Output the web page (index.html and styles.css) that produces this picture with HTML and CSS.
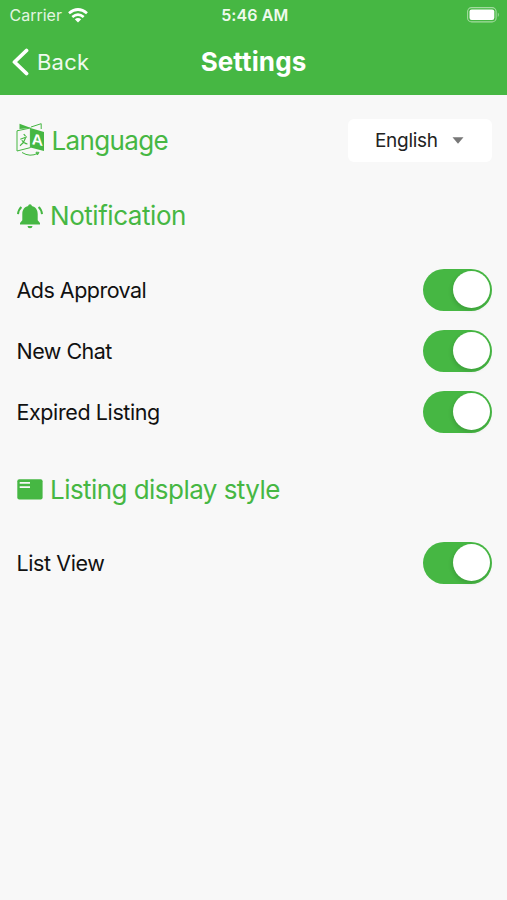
FILE: index.html
```
<!DOCTYPE html>
<html lang="en">
<head>
<meta charset="utf-8">
<title>Settings</title>
<link rel="stylesheet" href="styles.css">
</head>
<body>
<header class="header">
  <div class="status">
    <div class="carrier"><span>Carrier</span>
      <svg width="20" height="15" viewBox="0 0 20 15" fill="none" stroke="#fff" stroke-width="2.7"><path d="M1 5.3Q10-2.3 19 5.3M4.3 9Q10 4.2 15.7 9"/><path d="M6.8 11.2Q10 8.6 13.2 11.2L10 14.5z" fill="#fff" stroke="none"/></svg>
    </div>
    <span class="time">5:46 AM</span>
    <svg class="battery" width="33" height="16" viewBox="0 0 33 16"><rect x=".6" y=".6" width="28.5" height="14.3" rx="4" fill="none" stroke="#a4dba0" stroke-width="1.1"/><rect x="2.5" y="2.4" width="24.8" height="10.6" rx="2.2" fill="#fff"/><path d="M30.8 5.4q2 2.2 0 4.6z" fill="#a4dba0"/></svg>
  </div>
  <nav class="nav">
    <a class="back"><svg width="17" height="28" viewBox="0 0 17 28" fill="none" stroke="#fff" stroke-width="3.8" stroke-linecap="round" stroke-linejoin="round"><path d="M14.5 2.5L2.5 14L14.5 25.5"/></svg><span>Back</span></a>
    <h1 class="title">Settings</h1>
  </nav>
</header>
<main class="main">
  <section class="language">
    <h2 class="heading"><svg class="lang-icon" width="29" height="34" viewBox="0 0 29 34">
      <path d="M3.5 6V.7L15 5z" fill="#46b743"/>
      <path d="M15 4L25.2.7V6M1 7.8L14.4 5V24.6L1 28z" fill="#f8f8f8" stroke="#46b743"/>
      <path d="M14.4 5L28 9V28L14.4 24.6z" fill="#46b743"/>
      <text class="glyph-a" transform="translate(15.7 21.2) skewY(9)">A</text>
      <path d="M7.7 11.2L9.5 13M4.3 16.2L11 13.8M9.5 15Q8 20 4 22.8M5.8 17.2Q8 20.6 11.5 21" fill="none" stroke="#46b743" stroke-width="1.15"/>
      <path d="M6 29.5Q14 34.5 22 30.2M20 29.2L23 29.4L21.4 32z" fill="none" stroke="#46b743"/>
    </svg><span class="t-language">Language</span></h2>
    <button class="select"><span>English</span><svg width="12" height="7" viewBox="0 0 12 7"><path d="M.5.3h11L6 6.7z" fill="#777"/></svg></button>
  </section>
  <h2 class="heading notification"><svg width="26" height="25" viewBox="0 0 26 25" fill="#46b743"><path d="M13 .3C14 .3 14.7 1 14.8 2.1C18.7 3 20.7 6 20.7 10V16.2L23 19V20.5H3V19L5.3 16.2V10C5.3 6 7.3 3 11.2 2.1C11.3 1 12 .3 13 .3zM10.5 22h5a2.5 2.2 0 0 1-5 0z"/><path d="M4.4 3Q1.4 5.7 1 10.2M21.6 3Q24.6 5.7 25 10.2" fill="none" stroke="#46b743" stroke-width="2"/></svg><span class="t-notification">Notification</span></h2>
  <div class="row"><span class="t-ads">Ads Approval</span><i class="toggle"></i></div>
  <div class="row"><span class="t-chat">New Chat</span><i class="toggle"></i></div>
  <div class="row"><span class="t-expired">Expired Listing</span><i class="toggle"></i></div>
  <h2 class="heading listing"><svg width="26" height="21" viewBox="0 0 26 21"><rect x=".3" y=".2" width="25.3" height="20.3" rx="2" fill="#46b743"/><path d="M2.7 3.8H13M2.7 8.1H13" stroke="#f8f8f8" stroke-width="1.8"/></svg><span class="t-listing">Listing display style</span></h2>
  <div class="row"><span class="t-view">List View</span><i class="toggle"></i></div>
</main>
</body>
</html>
```
FILE: styles.css
```
* { box-sizing: border-box; }
body { margin: 0; min-height: 900px; background: #f8f8f8; color: #111; font-family: Inter, "Liberation Sans", sans-serif; white-space: nowrap; }
svg { display: block; flex: none; }
.header { height: 95px; background: #46b743; color: #fff; }
.status { height: 30px; display: grid; grid-template-columns: 1fr auto 1fr; align-items: center; padding: 0 7px 0 9.5px; }
.carrier { display: flex; align-items: center; gap: 6px; font-size: 16px; color: #e3f5e0; letter-spacing: 0; }
.time { font-size: 16px; font-weight: 600; letter-spacing: .1px; color: #effaee; }
.battery { justify-self: end; margin-top: -1px; }
.nav { height: 63px; display: grid; grid-template-columns: 1fr auto 1fr; align-items: center; padding: 0 12px; }
.back { display: flex; align-items: center; gap: 8px; font-size: 22px; letter-spacing: .2px; color: #effaee; }
.title { margin: 0; font-size: 26px; line-height: 32px; font-weight: 700; letter-spacing: .1px; }
.main { padding: 22px 15px 0 16px; }
.language { height: 46px; display: flex; align-items: center; justify-content: space-between; }
.heading { margin: 0; display: flex; align-items: center; gap: 7px; color: #46b743; font-size: 26px; line-height: 34px; font-weight: 400; }
.glyph-a { font: 700 15.5px "Liberation Sans", sans-serif; fill: #fff; }
.select { width: 144px; height: 43px; border: 0; border-radius: 6px; background: #fff; padding: 0 28px 0 27px; display: flex; align-items: center; justify-content: space-between; font: 400 19px Inter, sans-serif; letter-spacing: -.3px; color: #222; }
.notification { height: 34px; margin: 36px 0 26px; padding-left: 1px; }
.listing { height: 34px; margin: 30px 0 26px; padding-left: 1px; }
.t-language { letter-spacing: -.65px; padding-top: 2px; margin-left: -.5px; }
.t-notification { letter-spacing: -.45px; }
.t-listing { letter-spacing: -.55px; padding-top: 1px; }
.row { height: 61px; display: flex; align-items: center; justify-content: space-between; font-size: 21.5px; padding-left: .5px; letter-spacing: -.4px; }
.t-ads, .t-chat { letter-spacing: -.52px; }
.toggle { width: 69px; height: 42px; padding: 2.5px; border-radius: 21px; background: #46b743; display: flex; justify-content: flex-end; }
.toggle::after { content: ""; width: 37px; height: 37px; border-radius: 50%; background: #fff; box-shadow: -1px 2px 4px #0002; }
```
